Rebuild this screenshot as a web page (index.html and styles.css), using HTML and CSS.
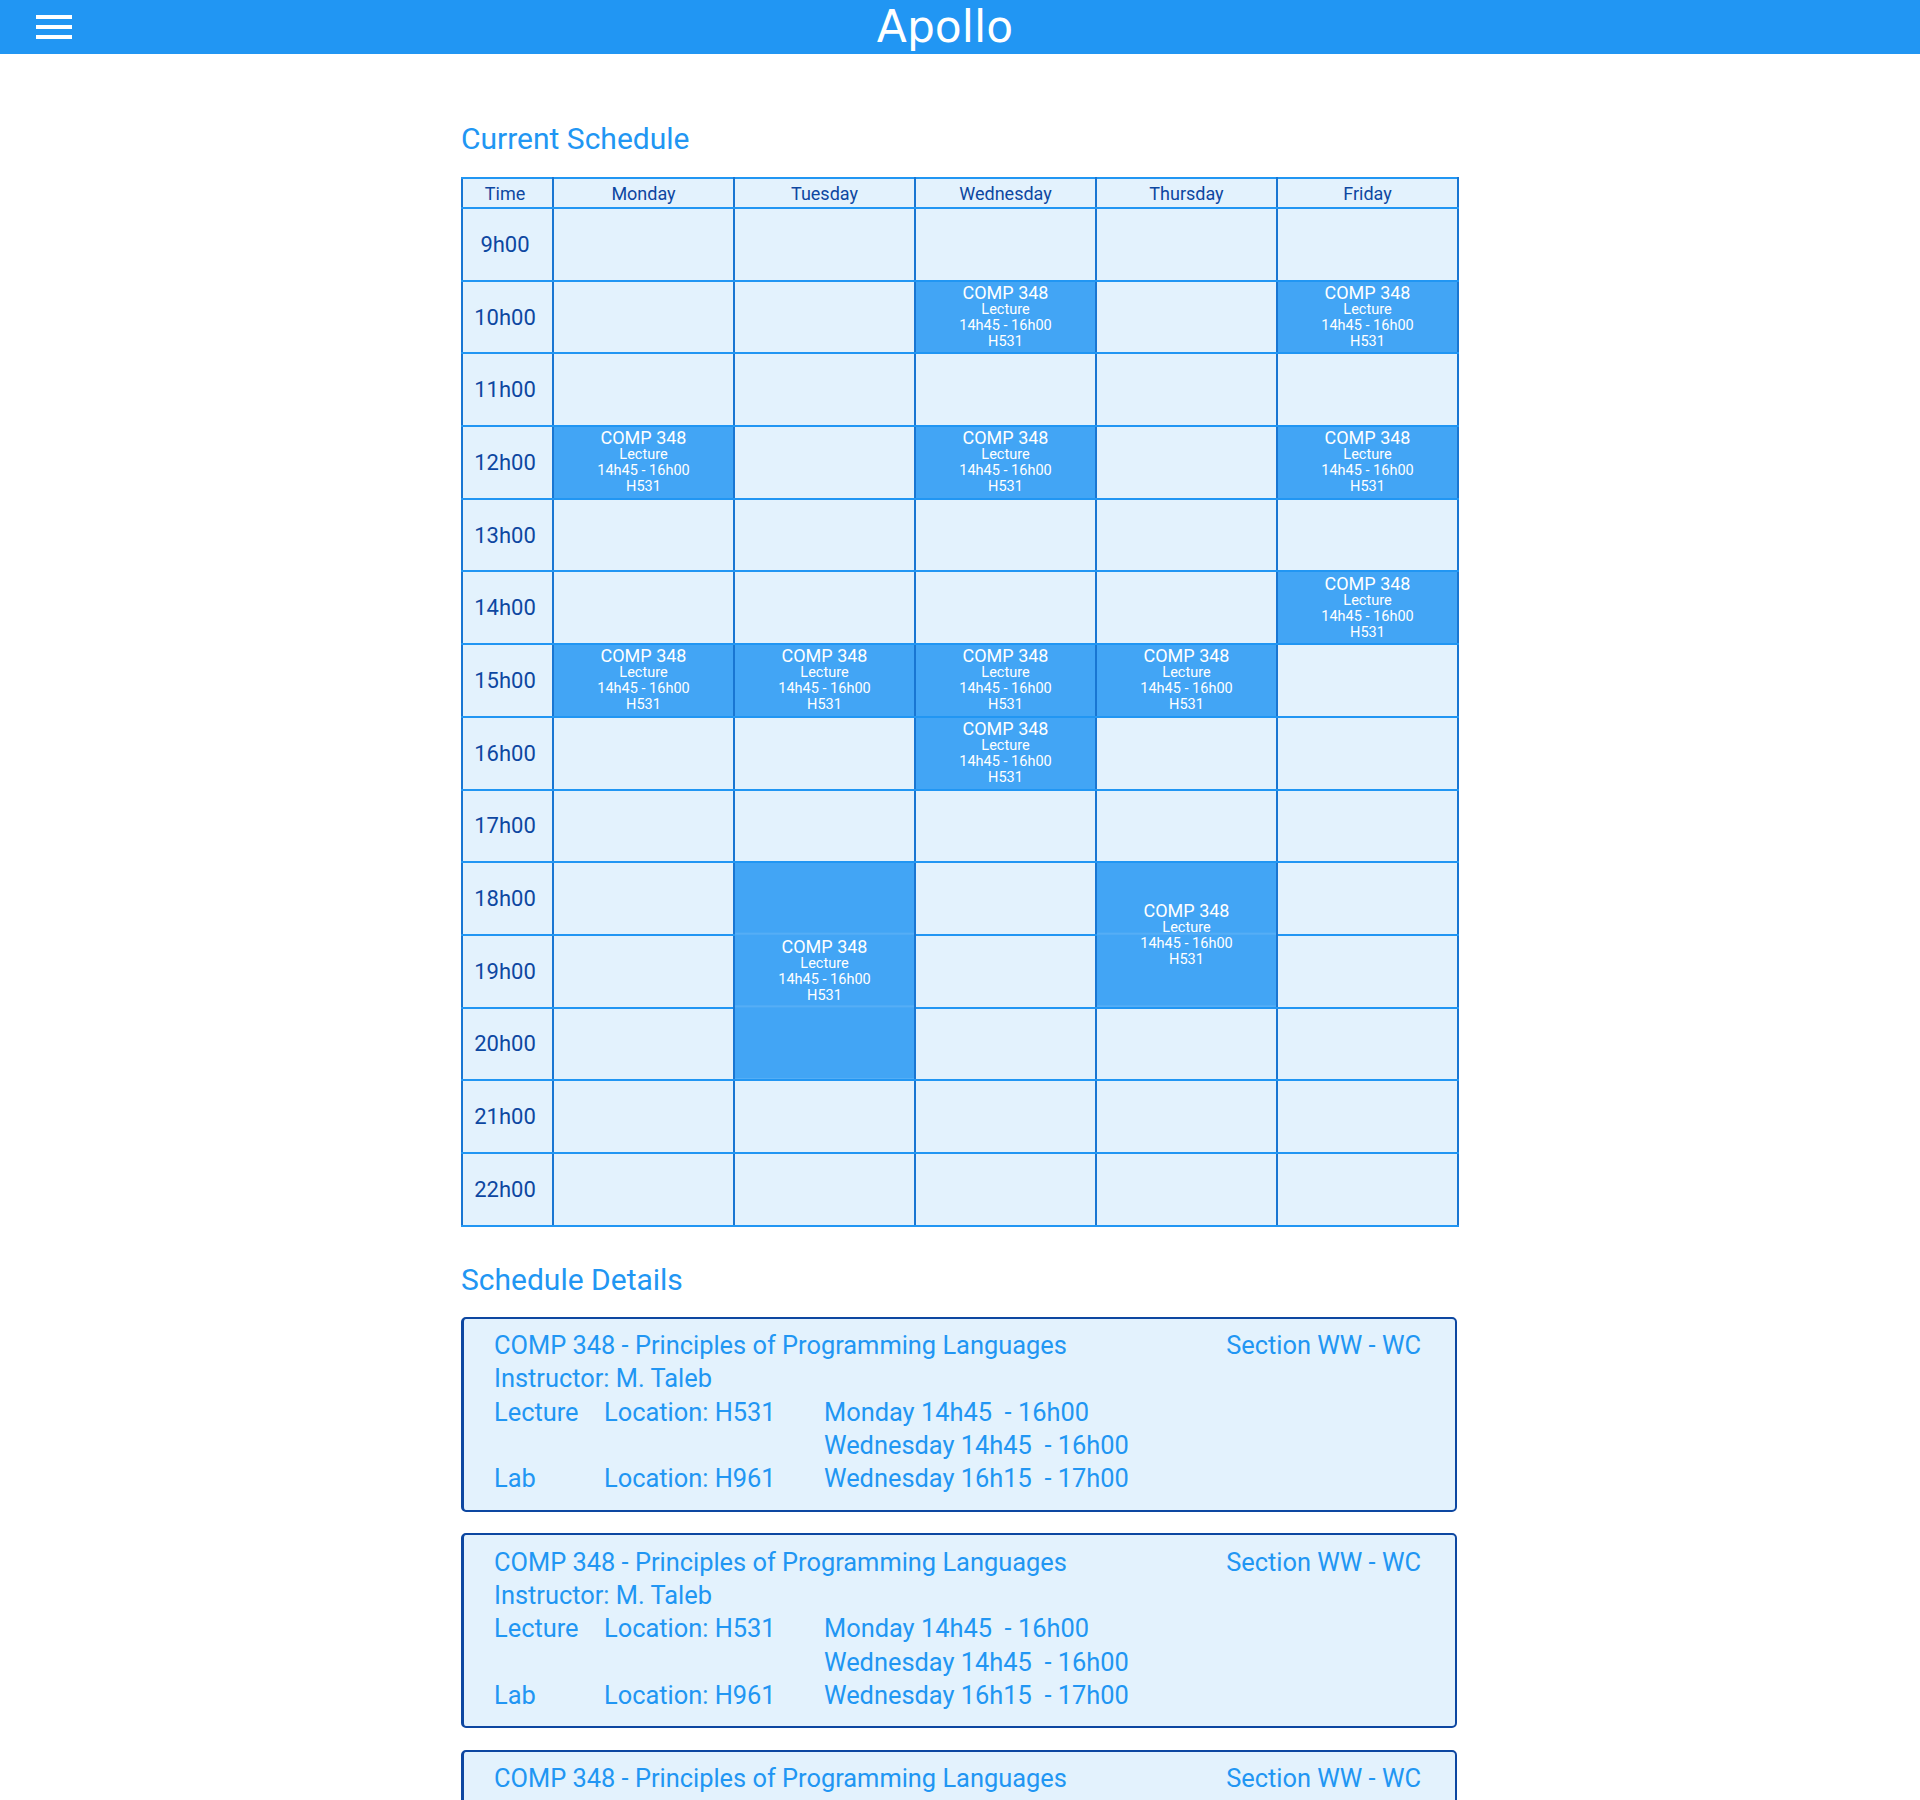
FILE: index.html
```html
<!DOCTYPE html>
<html lang="en">
<head>
<meta charset="utf-8">
<title>Apollo</title>
<link rel="stylesheet" href="styles.css">
</head>
<body>
<header class="topbar">
  <button class="menu" aria-label="Menu"><span></span><span></span><span></span></button>
  <h1 class="brand">Apollo</h1>
</header>
<main class="page">
  <h2 class="section-title">Current Schedule</h2>
  <table class="schedule">
    <colgroup><col class="c-time"><col class="c-day"><col class="c-day"><col class="c-day"><col class="c-day"><col class="c-day"></colgroup>
    <thead>
      <tr><th class="time-h">Time</th><th>Monday</th><th>Tuesday</th><th>Wednesday</th><th>Thursday</th><th>Friday</th></tr>
    </thead>
    <tbody>
      <tr><td class="time">9h00</td><td></td><td></td><td></td><td></td><td></td></tr>
      <tr><td class="time">10h00</td><td></td><td></td>
        <td class="ev"><div class="ev-title">COMP 348</div><div class="ev-line">Lecture</div><div class="ev-line">14h45 - 16h00</div><div class="ev-line">H531</div></td>
        <td></td>
        <td class="ev"><div class="ev-title">COMP 348</div><div class="ev-line">Lecture</div><div class="ev-line">14h45 - 16h00</div><div class="ev-line">H531</div></td></tr>
      <tr><td class="time">11h00</td><td></td><td></td><td></td><td></td><td></td></tr>
      <tr><td class="time">12h00</td>
        <td class="ev"><div class="ev-title">COMP 348</div><div class="ev-line">Lecture</div><div class="ev-line">14h45 - 16h00</div><div class="ev-line">H531</div></td>
        <td></td>
        <td class="ev"><div class="ev-title">COMP 348</div><div class="ev-line">Lecture</div><div class="ev-line">14h45 - 16h00</div><div class="ev-line">H531</div></td>
        <td></td>
        <td class="ev"><div class="ev-title">COMP 348</div><div class="ev-line">Lecture</div><div class="ev-line">14h45 - 16h00</div><div class="ev-line">H531</div></td></tr>
      <tr><td class="time">13h00</td><td></td><td></td><td></td><td></td><td></td></tr>
      <tr><td class="time">14h00</td><td></td><td></td><td></td><td></td>
        <td class="ev"><div class="ev-title">COMP 348</div><div class="ev-line">Lecture</div><div class="ev-line">14h45 - 16h00</div><div class="ev-line">H531</div></td></tr>
      <tr><td class="time">15h00</td>
        <td class="ev"><div class="ev-title">COMP 348</div><div class="ev-line">Lecture</div><div class="ev-line">14h45 - 16h00</div><div class="ev-line">H531</div></td>
        <td class="ev"><div class="ev-title">COMP 348</div><div class="ev-line">Lecture</div><div class="ev-line">14h45 - 16h00</div><div class="ev-line">H531</div></td>
        <td class="ev"><div class="ev-title">COMP 348</div><div class="ev-line">Lecture</div><div class="ev-line">14h45 - 16h00</div><div class="ev-line">H531</div></td>
        <td class="ev"><div class="ev-title">COMP 348</div><div class="ev-line">Lecture</div><div class="ev-line">14h45 - 16h00</div><div class="ev-line">H531</div></td>
        <td></td></tr>
      <tr><td class="time">16h00</td><td></td><td></td>
        <td class="ev"><div class="ev-title">COMP 348</div><div class="ev-line">Lecture</div><div class="ev-line">14h45 - 16h00</div><div class="ev-line">H531</div></td>
        <td></td><td></td></tr>
      <tr><td class="time">17h00</td><td></td><td></td><td></td><td></td><td></td></tr>
      <tr><td class="time">18h00</td><td></td>
        <td class="ev span" rowspan="3"><div class="ev-title">COMP 348</div><div class="ev-line">Lecture</div><div class="ev-line">14h45 - 16h00</div><div class="ev-line">H531</div></td>
        <td></td>
        <td class="ev span" rowspan="2"><div class="ev-title">COMP 348</div><div class="ev-line">Lecture</div><div class="ev-line">14h45 - 16h00</div><div class="ev-line">H531</div></td>
        <td></td></tr>
      <tr><td class="time">19h00</td><td></td><td></td><td></td></tr>
      <tr><td class="time">20h00</td><td></td><td></td><td></td><td></td></tr>
      <tr><td class="time">21h00</td><td></td><td></td><td></td><td></td><td></td></tr>
      <tr><td class="time">22h00</td><td></td><td></td><td></td><td></td><td></td></tr>
    </tbody>
  </table>

  <h2 class="section-title details-title">Schedule Details</h2>

  <div class="card">
    <div class="card-head"><span>COMP 348 - Principles of Programming Languages</span><span class="section-id">Section WW - WC</span></div>
    <div class="card-line">Instructor: M. Taleb</div>
    <div class="comp">
      <div class="comp-type">Lecture</div>
      <div class="comp-loc">Location: H531</div>
      <div class="comp-times"><div class="slot">Monday 14h45  - 16h00</div><div class="slot">Wednesday 14h45  - 16h00</div></div>
      <div class="comp-type">Lab</div>
      <div class="comp-loc">Location: H961</div>
      <div class="comp-times"><div class="slot">Wednesday 16h15  - 17h00</div></div>
    </div>
  </div>

  <div class="card">
    <div class="card-head"><span>COMP 348 - Principles of Programming Languages</span><span class="section-id">Section WW - WC</span></div>
    <div class="card-line">Instructor: M. Taleb</div>
    <div class="comp">
      <div class="comp-type">Lecture</div>
      <div class="comp-loc">Location: H531</div>
      <div class="comp-times"><div class="slot">Monday 14h45  - 16h00</div><div class="slot">Wednesday 14h45  - 16h00</div></div>
      <div class="comp-type">Lab</div>
      <div class="comp-loc">Location: H961</div>
      <div class="comp-times"><div class="slot">Wednesday 16h15  - 17h00</div></div>
    </div>
  </div>

  <div class="card">
    <div class="card-head"><span>COMP 348 - Principles of Programming Languages</span><span class="section-id">Section WW - WC</span></div>
    <div class="card-line">Instructor: M. Taleb</div>
    <div class="comp">
      <div class="comp-type">Lecture</div>
      <div class="comp-loc">Location: H531</div>
      <div class="comp-times"><div class="slot">Monday 14h45  - 16h00</div><div class="slot">Wednesday 14h45  - 16h00</div></div>
      <div class="comp-type">Lab</div>
      <div class="comp-loc">Location: H961</div>
      <div class="comp-times"><div class="slot">Wednesday 16h15  - 17h00</div></div>
    </div>
  </div>
</main>
</body>
</html>
```

FILE: styles.css
```css
html, body {
  margin: 0;
  padding: 0;
}
body {
  height: 1800px;
  overflow: hidden;
  background: #ffffff;
  font-family: Roboto, "Liberation Sans", sans-serif;
}

.topbar {
  height: 54px;
  background: #2196F3;
  display: flex;
  align-items: center;
}
.menu {
  margin-left: 36px;
  width: 36px;
  height: 24px;
  padding: 0;
  border: 0;
  background: transparent;
  display: flex;
  flex-direction: column;
  justify-content: space-between;
}
.menu span {
  display: block;
  height: 4px;
  width: 36px;
  background: #ffffff;
}
.brand {
  flex: 1;
  margin: 0;
  padding-right: 102px;
  text-align: center;
  font-family: "DejaVu Sans", sans-serif;
  font-weight: normal;
  font-size: 44px;
  line-height: 54px;
  color: #ffffff;
}

.page {
  width: 996px;
  margin-left: calc(50% - 499px);
}

.section-title {
  margin: 67px 0 21px 0;
  font-weight: normal;
  font-size: 30px;
  line-height: 35px;
  color: #2196F3;
}
.details-title {
  margin: 35px 0 20px 0;
}

.schedule {
  width: 996px;
  table-layout: fixed;
  border-collapse: collapse;
  border: 2px solid #1565C0;
  border-left-color: #5f7fa8;
  color: #0D47A1;
  background: #E3F2FD;
}
.c-time { width: 91px; }
.c-day { width: 181px; }

.schedule th,
.schedule td {
  border-top: 2px solid #2196F3;
  border-bottom: 2px solid #2196F3;
  border-left: 2px solid #1976D2;
  border-right: 2px solid #1976D2;
  padding: 0;
  text-align: center;
  vertical-align: middle;
}
.schedule th {
  height: 28px;
  font-weight: normal;
  font-size: 18px;
}
.schedule .time-h,
.schedule .time {
  padding-right: 5px;
}
.schedule tbody tr {
  height: 72.7px;
}
.schedule .time {
  font-size: 22px;
}
.schedule .ev {
  background: #42A5F5;
  color: #ffffff;
}
.schedule .ev.span {
  background-image: linear-gradient(to bottom, transparent 0, transparent 70px, rgba(255,255,255,0.10) 70px, rgba(255,255,255,0.10) 72px, transparent 72px);
  background-size: 100% 72.7px;
}
.ev-title {
  font-size: 18px;
  line-height: 18px;
}
.ev-line {
  font-size: 14.5px;
  line-height: 16px;
}

.card {
  background: #E3F2FD;
  border: 2px solid #0D47A1;
  border-left-width: 3px;
  border-radius: 5px;
  padding: 10.5px 34px 14px 30px;
  margin-bottom: 21.5px;
  color: #2196F3;
  font-size: 25.4px;
  line-height: 33.3px;
  white-space: nowrap;
}
.card-head {
  display: flex;
  justify-content: space-between;
  align-items: baseline;
}
.comp {
  display: grid;
  grid-template-columns: 110px 220px 1fr;
}
.slot {
  white-space: pre;
}
```
